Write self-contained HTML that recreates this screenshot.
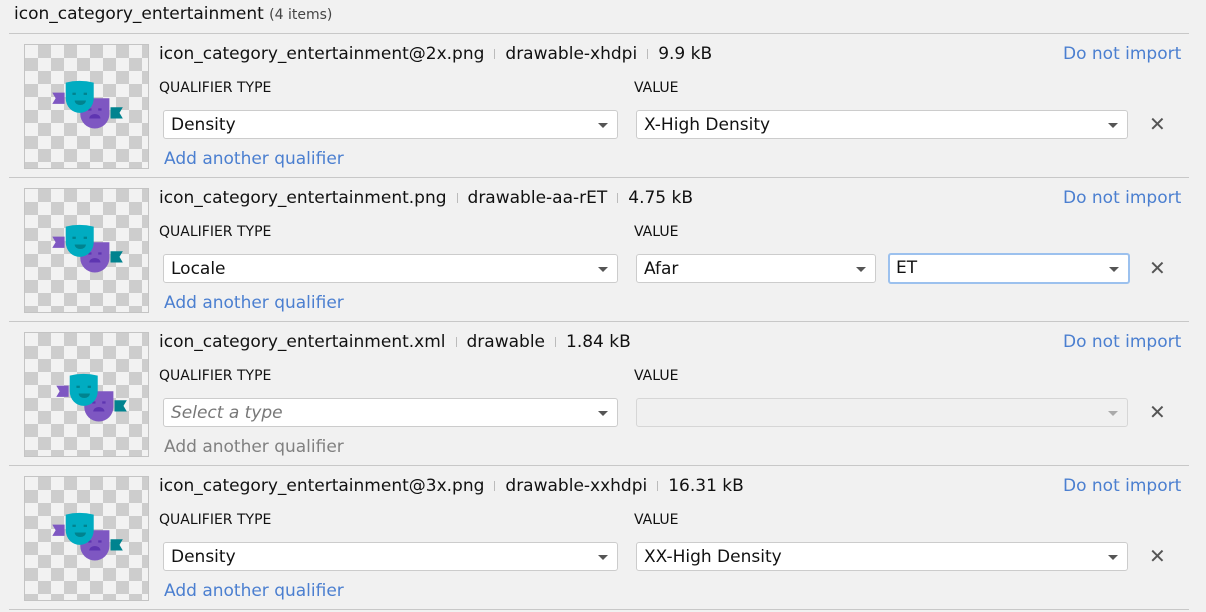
<!DOCTYPE html>
<html><head><meta charset="utf-8"><style>
body{margin:0;width:1206px;height:612px;background:#f1f1f1;font-family:"DejaVu Sans","Liberation Sans",sans-serif;color:#111;position:relative;overflow:hidden}
.a{position:absolute;white-space:nowrap}
.hdr{left:14px;top:4px;font-size:17px}
.hdr span{font-size:14px;color:#444}
.line{position:absolute;left:9px;width:1180px;height:1px;background:#c8c8c8}
.thumb{position:absolute;left:24px;width:123px;height:123px;border:1px solid #c4c4c4;
background-color:#f2f2f2;background-image:linear-gradient(45deg,#cdcdcd 25%,transparent 25%,transparent 75%,#cdcdcd 75%),linear-gradient(45deg,#cdcdcd 25%,transparent 25%,transparent 75%,#cdcdcd 75%);background-size:26px 26px;background-position:0 0,13px 13px}
.thumb svg{position:absolute;left:0;top:0}
.fn{left:159px;font-size:17px;margin-top:2px}
.sep{display:inline-block;width:1px;height:10px;background:#bbb;margin:0 10px;vertical-align:middle}
.lbl{font-size:14px;margin-top:1px}
.dd{position:absolute;height:29px;background:#fff;border:1px solid #ccc;border-radius:3px;box-sizing:border-box;font-size:17px;line-height:29px;padding-left:7px}
.dd:after{content:"";position:absolute;right:9px;top:12px;border-left:5px solid transparent;border-right:5px solid transparent;border-top:5px solid #555}
.dd.dis{background:#f0f0f0;border-color:#d6d6d6}
.dd.dis:after{border-top-color:#aaa}
.dd.foc{border:2px solid #9cc1ee;line-height:27px;padding-left:6px}
.link{color:#4b7fd0;font-size:17px}
.add{margin-top:1px}
.x{position:absolute;left:1149px;font-size:20px;color:#555;line-height:20px}
</style></head><body>
<div class="a hdr">icon_category_entertainment <span>(4 items)</span></div>
<div class="line" style="top:33px"></div>
<div class="line" style="top:177px"></div>
<div class="line" style="top:321px"></div>
<div class="line" style="top:465px"></div>
<div class="line" style="top:609px"></div>

<svg width="0" height="0" style="position:absolute"><defs>
<g id="ic0">
<path d="M31 49 h11 v10 h-11 l3-5z" fill="#7e57c2"/>
<path d="M94 62 h-11 v10 h11 l-3-5z" fill="#00838f"/>
<path d="M56 54 h26 v14 a13 13 0 0 1-26 0z" fill="#7e57c2"/>
<path d="M64 72 a5 4 0 0 1 10 0z" fill="#5e35b1"/>
<rect x="63" y="63" width="3" height="2" fill="#5e35b1"/><rect x="72" y="63" width="3" height="2" fill="#5e35b1"/>
<path d="M43 40 q12 -3 25 0 v14 a12.5 13 0 0 1-25 0z" fill="#00acc1"/>
<path d="M51 56 a5 4 0 0 0 10 0z" fill="#00838f"/>
<rect x="49" y="49" width="3" height="2" fill="#00838f"/><rect x="59" y="49" width="3" height="2" fill="#00838f"/>
</g>
<g id="ic"><g transform="translate(62 60) scale(1.12) translate(-62 -60)"><use href="#ic0"/></g></g>
</defs></svg>

<div class="thumb" style="top:44px"><svg width="123" height="123"><use href="#ic"/></svg></div>
<div class="a fn" style="top:42px">icon_category_entertainment@2x.png<span class="sep"></span>drawable-xhdpi<span class="sep"></span>9.9 kB</div>
<div class="a link" style="left:1063px;top:44px">Do not import</div>
<div class="a lbl" style="left:159px;top:79px">QUALIFIER TYPE</div>
<div class="a lbl" style="left:634px;top:79px">VALUE</div>
<div class="dd" style="left:163px;width:455px;top:110px">Density</div>
<div class="dd" style="left:636px;width:492px;top:110px">X-High Density</div>
<div class="x" style="top:114px">✕</div>
<div class="a link add" style="left:164px;top:148px">Add another qualifier</div>

<div class="thumb" style="top:188px"><svg width="123" height="123"><use href="#ic"/></svg></div>
<div class="a fn" style="top:186px">icon_category_entertainment.png<span class="sep"></span>drawable-aa-rET<span class="sep"></span>4.75 kB</div>
<div class="a link" style="left:1063px;top:188px">Do not import</div>
<div class="a lbl" style="left:159px;top:223px">QUALIFIER TYPE</div>
<div class="a lbl" style="left:634px;top:223px">VALUE</div>
<div class="dd" style="left:163px;width:455px;top:254px">Locale</div>
<div class="dd" style="left:636px;width:240px;top:254px">Afar</div>
<div class="dd foc" style="left:888px;width:242px;top:253px;height:31px">ET</div>
<div class="x" style="top:258px">✕</div>
<div class="a link add" style="left:164px;top:292px">Add another qualifier</div>

<div class="thumb" style="top:332px"><svg width="123" height="123"><g transform="translate(4,5)"><use href="#ic"/></g></svg></div>
<div class="a fn" style="top:330px">icon_category_entertainment.xml<span class="sep"></span>drawable<span class="sep"></span>1.84 kB</div>
<div class="a link" style="left:1063px;top:332px">Do not import</div>
<div class="a lbl" style="left:159px;top:367px">QUALIFIER TYPE</div>
<div class="a lbl" style="left:634px;top:367px">VALUE</div>
<div class="dd" style="left:163px;width:455px;top:398px;color:#777;font-style:italic">Select a type</div>
<div class="dd dis" style="left:636px;width:492px;top:398px"></div>
<div class="x" style="top:402px">✕</div>
<div class="a add" style="left:164px;top:436px;font-size:17px;color:#808080">Add another qualifier</div>

<div class="thumb" style="top:476px"><svg width="123" height="123"><use href="#ic"/></svg></div>
<div class="a fn" style="top:474px">icon_category_entertainment@3x.png<span class="sep"></span>drawable-xxhdpi<span class="sep"></span>16.31 kB</div>
<div class="a link" style="left:1063px;top:476px">Do not import</div>
<div class="a lbl" style="left:159px;top:511px">QUALIFIER TYPE</div>
<div class="a lbl" style="left:634px;top:511px">VALUE</div>
<div class="dd" style="left:163px;width:455px;top:542px">Density</div>
<div class="dd" style="left:636px;width:492px;top:542px">XX-High Density</div>
<div class="x" style="top:546px">✕</div>
<div class="a link add" style="left:164px;top:580px">Add another qualifier</div>
</body></html>
